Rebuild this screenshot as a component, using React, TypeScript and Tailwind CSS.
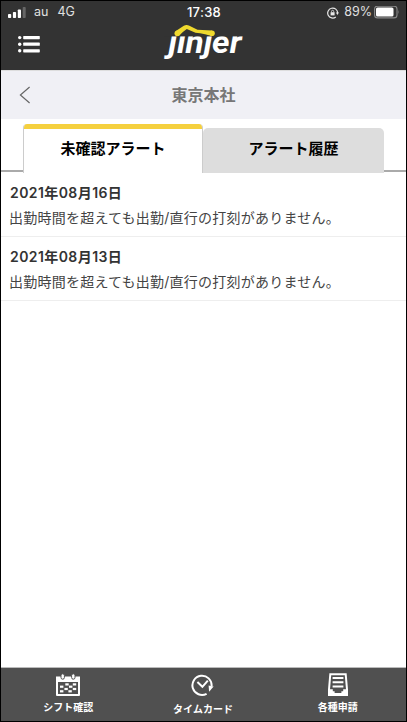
import React from 'react';

interface Alert {
  id: number;
  date: string;
  message: string;
}

const alerts: Alert[] = [
  { id: 1, date: '2021年08月16日', message: '出勤時間を超えても出勤/直行の打刻がありません。' },
  { id: 2, date: '2021年08月13日', message: '出勤時間を超えても出勤/直行の打刻がありません。' },
];

function StatusBar() {
  return (
    <div className="grid h-[22px] grid-cols-3 items-center pr-[6px] pl-[7px] text-[12.5px] leading-none text-[#e0e0e0]">
      <div className="flex items-center pt-px">
        <svg width="18" height="12" viewBox="0 0 18 12" fill="#fff">
          <rect x="0" y="7" width="3.2" height="4" rx="0.8" />
          <rect x="4.9" y="5" width="3.2" height="6" rx="0.8" />
          <rect x="9.8" y="2.5" width="3.2" height="8.5" rx="0.8" />
          <rect x="14.7" y="0" width="3" height="11" rx="0.8" fill="#666" />
        </svg>
        <span className="ml-[8px]">au</span>
        <span className="ml-[9px]">4G</span>
      </div>
      <div className="text-center text-[13px] font-medium tracking-[0.3px] text-white">17:38</div>
      <div className="flex items-center justify-end pt-px">
        <svg width="12" height="12" viewBox="0 0 12 12" fill="none" stroke="#e8e8e8">
          <path d="M8.8 10a5 5 0 1 1 1.9-4" strokeWidth="1.2" />
          <path d="M8.9 5.6h3L10.4 8z" fill="#e8e8e8" stroke="none" />
          <rect x="3.6" y="5.2" width="4" height="3.2" fill="#e8e8e8" stroke="none" />
          <path d="M4.5 5.2V4.4a1.1 1.1 0 0 1 2.2 0v.8" strokeWidth="0.8" />
        </svg>
        <span className="ml-[5px]">89%</span>
        <svg className="ml-[2px]" width="26" height="13" viewBox="0 0 26 13">
          <rect x="0.6" y="0.1" width="22.4" height="11.8" rx="3" fill="none" stroke="#8a8a8a" strokeWidth="1.1" />
          <rect x="2" y="1.5" width="17.5" height="9" rx="1.6" fill="#fff" />
          <path d="M24.3 4q1.2 2 0 4z" fill="#8a8a8a" />
        </svg>
      </div>
    </div>
  );
}

function Logo() {
  return (
    <svg width="80" height="46" viewBox="0 0 80 46" className="shrink-0 overflow-visible">
      <text
        x="4.5"
        y="29.3"
        fill="#fff"
        fontSize="30.5"
        fontWeight="700"
        fontStyle="italic"
        textLength="73"
        lengthAdjust="spacingAndGlyphs"
        className="font-['Roboto',sans-serif]"
      >
        jinjer
      </text>
      <rect x="0" y="-1" width="80" height="13.4" fill="#333" />
      <g fill="#efd92e">
        <circle cx="13.4" cy="9.3" r="2.9" />
        <circle cx="48" cy="9.3" r="2.8" />
        <path d="M11.5 7.2L19.8 1.8Q22.5 .2 25.4 1.8L33.5 5.8L48 6.6V12L41 10.2Q36 9.2 31.5 8.8L22.8 4.9Q18 8.2 15.5 11.2z" />
      </g>
    </svg>
  );
}

function Header() {
  return (
    <header className="h-[69px] shrink-0 bg-[#333]">
      <StatusBar />
      <div className="grid h-[47px] grid-cols-3">
        <div className="pt-[12px] pl-[17px]">
          <svg width="23" height="18" viewBox="0 0 23 18" fill="#fff">
            <circle cx="1.7" cy="2.6" r="1.7" />
            <circle cx="1.7" cy="9.2" r="1.7" />
            <circle cx="1.7" cy="15.8" r="1.7" />
            <rect x="5.2" y="1" width="16.6" height="3.2" rx="0.6" />
            <rect x="5.2" y="7.6" width="16.6" height="3.2" rx="0.6" />
            <rect x="5.2" y="14.2" width="16.6" height="3.2" rx="0.6" />
          </svg>
        </div>
        <div className="flex justify-center pt-px">
          <Logo />
        </div>
      </div>
    </header>
  );
}

function TitleBar() {
  return (
    <div className="grid h-[49px] shrink-0 grid-cols-[60px_1fr_60px] items-center border-t border-[#ddd] bg-[#f0f0f5]">
      <svg className="ml-[18px]" width="12" height="18" viewBox="0 0 12 18" fill="none" stroke="#666" strokeWidth="1.2">
        <path d="M10.6 1L1.4 9l9.2 8" />
      </svg>
      <h1 className="pb-px text-center text-[16px] leading-none font-bold text-[#777]">東京本社</h1>
    </div>
  );
}

function Tabs() {
  return (
    <div className="flex h-[54px] shrink-0 items-end text-[15px] font-bold text-black">
      <div className="mb-px h-[2px] w-[22px] bg-[#aaa]" />
      <div className="flex h-[49px] w-[180px] flex-col overflow-hidden rounded-t-[4px] border-x border-[#ccc] bg-white">
        <div className="-mx-px h-[5px] shrink-0 bg-[#f5d03e]" />
        <div className="flex h-[40px] items-center justify-center">未確認アラート</div>
      </div>
      <div className="flex h-[45px] w-[181px] items-center justify-center rounded-t-[5px] bg-[#ddd] pb-[3px]">アラート履歴</div>
      <div className="mb-px h-[2px] flex-1 bg-[#aaa]" />
    </div>
  );
}

function AlertRow({ alert }: { alert: Alert }) {
  return (
    <li className="h-[64px] border-b border-[#eee] pt-[10px] pl-[9px] text-[14px] text-[#333]">
      <p className="h-[20px] leading-[20px] font-semibold tracking-[0.42px]">{alert.date}</p>
      <p className="mt-[4px] -ml-px leading-[22px] tracking-[0.24px] text-[#444]">{alert.message}</p>
    </li>
  );
}

function CalendarIcon() {
  return (
    <svg width="26" height="24" viewBox="0 0 26 24">
      <path d="M1 3.5h24V22a1 1 0 0 1-1 1H2a1 1 0 0 1-1-1z" fill="#fff" />
      <path d="M3 9h20v12H3z" fill="#505050" />
      <g fill="#fff" stroke="#505050" strokeWidth="1">
        <rect x="6" y="0.8" width="3.4" height="5.4" rx="1.7" />
        <rect x="16.6" y="0.8" width="3.4" height="5.4" rx="1.7" />
      </g>
      <g fill="#fff">
        <rect x="10.3" y="10.3" width="3.4" height="2.2" />
        <rect x="17.8" y="10.3" width="3.4" height="2.2" />
        <rect x="5" y="12.6" width="3.4" height="2.2" />
        <rect x="14" y="12.6" width="3.4" height="2.2" />
        <rect x="9.4" y="14.9" width="3.4" height="2.2" />
        <rect x="17.8" y="14.9" width="3.4" height="2.2" />
        <rect x="5" y="17.2" width="3.4" height="2.2" />
        <rect x="13.4" y="17.2" width="3.4" height="2.2" />
      </g>
    </svg>
  );
}

function ClockIcon() {
  return (
    <svg width="24" height="24" viewBox="0 0 24 24" fill="none" stroke="#fff">
      <path d="M15.6 20.8A9.6 9.6 0 1 1 20.6 13" strokeWidth="2" />
      <path d="M6.4 9l5 4.8 5.4-6.2" strokeWidth="2" />
      <path d="M17.6 12.4l5 1.2-4.5 5.2z" fill="#fff" stroke="none" />
    </svg>
  );
}

function TrayIcon() {
  return (
    <svg width="22" height="24" viewBox="0 0 22 24">
      <path d="M3.3 1.2h15.4L20 16.5V22H2v-5.5z" fill="none" stroke="#fff" strokeWidth="2" />
      <path d="M1 16.3h4.8v2h1.8v1.6h6.8v-1.6h1.8v-2H21V23H1z" fill="#fff" />
      <path d="M5.6 5h10.8M5.6 9.3h10.8M5.6 13.6h10.8" stroke="#fff" strokeWidth="2" />
    </svg>
  );
}

const navItems = [
  { label: 'シフト確認', icon: <CalendarIcon />, labelClass: 'mt-[3px]' },
  { label: 'タイムカード', icon: <ClockIcon />, labelClass: 'mt-[5px]' },
  { label: '各種申請', icon: <TrayIcon />, labelClass: 'mt-[3px]' },
];

export default function App() {
  return (
    <div className="flex h-[722px] w-[407px] flex-col border border-black bg-white font-['Inter','Noto_Sans_CJK_JP',sans-serif]">
      <Header />
      <TitleBar />
      <Tabs />
      <ul className="flex-1">
        {alerts.map((alert) => (
          <AlertRow key={alert.id} alert={alert} />
        ))}
      </ul>
      <nav className="grid h-[54px] shrink-0 grid-cols-3 border-t border-[#bbb] bg-[#505050] pr-px">
        {navItems.map((item) => (
          <div key={item.label} className="flex flex-col items-center pt-[5px] text-[10px] font-bold text-white">
            {item.icon}
            <span className={`leading-[14px] ${item.labelClass}`}>{item.label}</span>
          </div>
        ))}
      </nav>
    </div>
  );
}
